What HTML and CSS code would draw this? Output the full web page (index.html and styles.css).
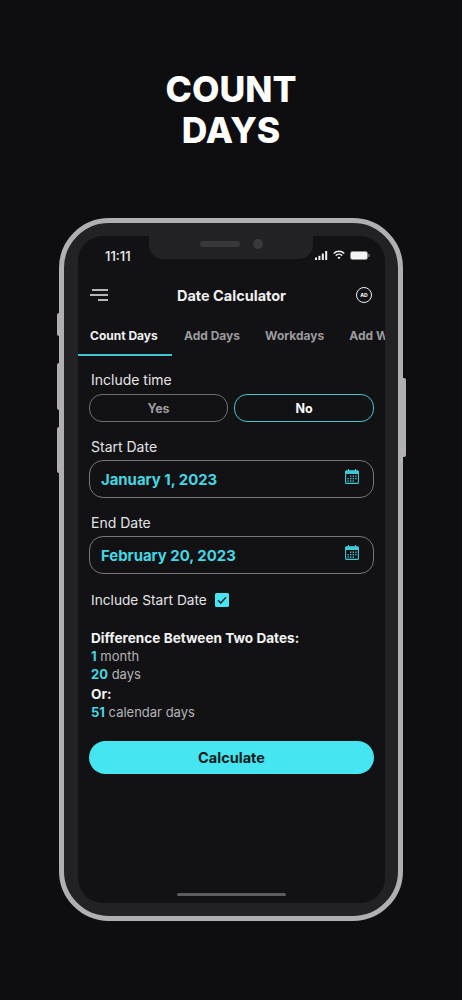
FILE: index.html
```html
<!DOCTYPE html>
<html lang="en">
<head>
<meta charset="utf-8">
<title>Count Days</title>
<link rel="stylesheet" href="styles.css">
</head>
<body>
<main class="page">
  <h1 class="headline">COUNT<br>DAYS</h1>
  <div class="phone">
    <span class="side side-mute"></span>
    <span class="side side-up"></span>
    <span class="side side-down"></span>
    <span class="side side-power"></span>
    <div class="screen">
      <div class="notch"><span class="speaker"></span><span class="camera"></span></div>
      <div class="status">
        <span class="clock">11:11</span>
        <div class="status-icons">
          <svg class="i-signal" viewBox="0 0 13 9" width="13" height="9"><g fill="#f2f2f2"><rect x="0" y="6.5" width="2" height="2.5"/><rect x="3.4" y="4.8" width="2" height="4.2"/><rect x="6.8" y="2.5" width="2" height="6.5"/><rect x="10.2" y="0" width="2" height="9"/></g></svg>
          <svg class="i-wifi" viewBox="0 0 13 10" width="12" height="10"><g fill="none" stroke="#f2f2f2" stroke-width="1.6"><path d="M.8 3.4a8 8 0 0 1 11.4 0"/><path d="M3 5.7a5 5 0 0 1 7 0"/></g><path d="M6.5 9.6 4.9 7.8a2.3 2.3 0 0 1 3.2 0z" fill="#f2f2f2"/></svg>
          <svg class="i-batt" viewBox="0 0 20 9" width="20" height="9"><rect x=".5" y=".5" width="17" height="8" rx="2" fill="#f4f4f4" stroke="#8a8a8a"/><rect x="18.4" y="3" width="1.2" height="3" fill="#8a8a8a"/></svg>
        </div>
      </div>
      <header class="appbar">
        <svg class="i-menu" viewBox="0 0 20 12" width="20" height="12"><g stroke="#eee" stroke-width="1.3"><path d="M3 1h16"/><path d="M1 6h18"/><path d="M9 11h10"/></g></svg>
        <span class="app-title">Date Calculator</span>
        <span class="ad-badge">AD</span>
      </header>
      <nav class="tabs">
        <span class="tab tab-active">Count Days</span>
        <span class="tab">Add Days</span>
        <span class="tab">Workdays</span>
        <span class="tab">Add Workdays</span>
      </nav>
      <section class="form">
        <div class="label label-first">Include time</div>
        <div class="toggle">
          <button class="pill">Yes</button>
          <button class="pill pill-on">No</button>
        </div>
        <div class="label">Start Date</div>
        <div class="field">
          <span class="date">January 1, 2023</span>
          <svg class="i-cal" viewBox="0 0 14 15" width="14" height="15"><g fill="none" stroke="#41c9d6" stroke-width="1.1"><rect x=".6" y="1.8" width="12.8" height="12.6" rx="1"/><path d="M3.5 0v3M10.5 0v3"/></g><rect x=".6" y="1.8" width="12.8" height="3.2" fill="#41c9d6"/><g fill="#41c9d6"><rect x="5" y="6.6" width="1.4" height="1.3"/><rect x="7.6" y="6.6" width="1.4" height="1.3"/><rect x="10.2" y="6.6" width="1.4" height="1.3"/><rect x="2.4" y="9" width="1.4" height="1.3"/><rect x="5" y="9" width="1.4" height="1.3"/><rect x="7.6" y="9" width="1.4" height="1.3"/><rect x="10.2" y="9" width="1.4" height="1.3"/><rect x="2.4" y="11.4" width="1.4" height="1.3"/><rect x="5" y="11.4" width="1.4" height="1.3"/><rect x="7.6" y="11.4" width="1.4" height="1.3"/></g></svg>
        </div>
        <div class="label">End Date</div>
        <div class="field">
          <span class="date">February 20, 2023</span>
          <svg class="i-cal" viewBox="0 0 14 15" width="14" height="15"><g fill="none" stroke="#41c9d6" stroke-width="1.1"><rect x=".6" y="1.8" width="12.8" height="12.6" rx="1"/><path d="M3.5 0v3M10.5 0v3"/></g><rect x=".6" y="1.8" width="12.8" height="3.2" fill="#41c9d6"/><g fill="#41c9d6"><rect x="5" y="6.6" width="1.4" height="1.3"/><rect x="7.6" y="6.6" width="1.4" height="1.3"/><rect x="10.2" y="6.6" width="1.4" height="1.3"/><rect x="2.4" y="9" width="1.4" height="1.3"/><rect x="5" y="9" width="1.4" height="1.3"/><rect x="7.6" y="9" width="1.4" height="1.3"/><rect x="10.2" y="9" width="1.4" height="1.3"/><rect x="2.4" y="11.4" width="1.4" height="1.3"/><rect x="5" y="11.4" width="1.4" height="1.3"/><rect x="7.6" y="11.4" width="1.4" height="1.3"/></g></svg>
        </div>
        <div class="include">
          <span class="label-inline">Include Start Date</span>
          <svg class="i-check" viewBox="0 0 14 14" width="14" height="14"><rect width="14" height="14" rx="1.5" fill="#45e6f2"/><path d="M3 7.2l2.8 2.8L11 4.2" fill="none" stroke="#10262b" stroke-width="1.5"/></svg>
        </div>
        <div class="results">
          <div class="res-head">Difference Between Two Dates:</div>
          <div class="res-line"><b>1</b> month</div>
          <div class="res-line"><b>20</b> days</div>
          <div class="res-head res-or">Or:</div>
          <div class="res-line"><b>51</b> calendar days</div>
        </div>
        <button class="calc">Calculate</button>
      </section>
      <span class="home"></span>
    </div>
  </div>
</main>
</body>
</html>
```
FILE: styles.css
```css
* { box-sizing: border-box; }
html, body { margin: 0; padding: 0; }
body {
  background: #0e0e10;
  font-family: "Inter", "Liberation Sans", sans-serif;
  color: #eee;
}
.page {
  width: 462px;
  height: 1000px;
  overflow: hidden;
  display: flex;
  flex-direction: column;
  align-items: center;
}
.headline {
  margin: 69px 0 0;
  height: 149px;
  font-size: 35.5px;
  line-height: 41px;
  font-weight: 800;
  color: #fff;
  text-align: center;
}
.phone {
  position: relative;
  width: 344px;
  height: 703px;
  padding: 13px 13px 13px 14px;
  border: 5px solid #b1afb1;
  border-radius: 50px;
  background: #222225;
  flex: none;
}
.side {
  position: absolute;
  width: 2px;
  background: #b1afb1;
}
.side-mute { left: -7px; top: 90px; height: 23px; border-radius: 2px 0 0 2px; }
.side-up { left: -7px; top: 140px; height: 47px; border-radius: 2px 0 0 2px; }
.side-down { left: -7px; top: 204px; height: 46px; border-radius: 2px 0 0 2px; }
.side-power { right: -8px; top: 155px; height: 79px; width: 3px; border-radius: 0 2px 2px 0; }
.screen {
  position: relative;
  height: 100%;
  overflow: hidden;
  border-radius: 25px;
  background: #121215;
}
.notch {
  position: absolute;
  left: 71px;
  top: 0;
  width: 164px;
  height: 23px;
  background: #222225;
  border-radius: 0 0 14px 14px;
}
.speaker {
  position: absolute;
  left: 51px;
  top: 5px;
  width: 40px;
  height: 6px;
  border-radius: 3px;
  background: #38383b;
}
.camera {
  position: absolute;
  left: 104px;
  top: 3px;
  width: 10px;
  height: 10px;
  border-radius: 50%;
  background: #3a3a3d;
}
.status {
  height: 38px;
  padding: 2px 0 0 27px;
  display: flex;
  justify-content: space-between;
  align-items: center;
}
.clock {
  font-size: 13px;
  font-weight: 500;
  color: #efefef;
}
.status-icons {
  display: flex;
  align-items: center;
  gap: 5px;
  padding: 0 15px 2px 0;
}
.appbar {
  height: 42px;
  display: flex;
  align-items: center;
  justify-content: space-between;
  padding: 0 13px 0 11px;
}
.i-menu { flex: none; }
.app-title {
  font-size: 14.5px;
  font-weight: 700;
  color: #f0f0f0;
  margin-right: 2px;
}
.ad-badge {
  width: 16px;
  height: 16px;
  border: 1.3px solid #eee;
  border-radius: 50%;
  font-size: 5px;
  font-weight: 800;
  display: flex;
  align-items: center;
  justify-content: center;
  color: #eee;
}
.tabs {
  height: 40px;
  display: flex;
  white-space: nowrap;
  overflow: hidden;
  font-size: 12px;
  font-weight: 700;
}
.tab {
  color: #9b9b9d;
  padding: 12px 13px 0 12px;
  flex: none;
}
.tab-active {
  width: 94px;
  padding-right: 0;
  color: #f2f2f2;
  border-bottom: 2px solid #3fc6d0;
}
.form {
  padding: 15px 11px 0;
}
.label {
  font-size: 14px;
  line-height: 18px;
  color: #e4e4e4;
  padding-left: 2px;
  margin-top: 16px;
  margin-bottom: 4px;
}
.label-first { margin-top: 0; margin-bottom: 5px; }
.toggle {
  display: grid;
  grid-template-columns: 139px 140px;
  gap: 6px;
}
.pill {
  height: 28px;
  border: 1px solid #6f6f72;
  border-radius: 13px;
  background: transparent;
  color: #9d9d9f;
  font: 700 12.5px "Inter", "Liberation Sans", sans-serif;
  padding: 0;
}
.pill-on {
  border-color: #3fc6d0;
  color: #fff;
}
.field {
  height: 38px;
  border: 1px solid #77777a;
  border-radius: 14px;
  display: flex;
  align-items: center;
  justify-content: space-between;
  padding: 1px 14px 0 11px;
}
.date {
  font-size: 14.9px;
  font-weight: 700;
  color: #45d6e2;
}
.i-cal { position: relative; top: -3px; }
.include {
  display: flex;
  align-items: center;
  gap: 8px;
  height: 18px;
  margin-top: 17px;
  padding-left: 2px;
}
.label-inline {
  font-size: 13.7px;
  color: #e4e4e4;
}
.results {
  margin-top: 20px;
  padding-left: 2px;
  font-size: 13px;
  line-height: 18px;
}
.res-head { font-weight: 700; color: #f4f4f4; font-size: 13.6px; line-height: 18px; }
.res-or { margin-top: 2px; }
.res-line { color: #b4b4b6; }
.res-line b { color: #45d6e2; font-weight: 700; }
.calc {
  display: block;
  width: 100%;
  height: 33px;
  margin-top: 20px;
  border: 0;
  border-radius: 17px;
  background: #45e6f2;
  color: #0c1a20;
  font: 700 14.5px "Inter", "Liberation Sans", sans-serif;
}
.home {
  position: absolute;
  left: 99px;
  bottom: 7px;
  width: 109px;
  height: 3px;
  border-radius: 2px;
  background: #5c5c5f;
}
```
